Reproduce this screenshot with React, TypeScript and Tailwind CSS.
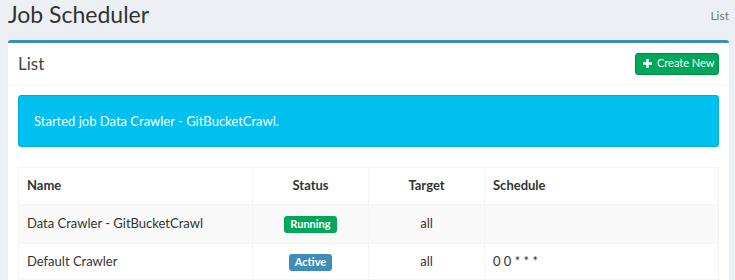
import React from "react";

const rows = [
  { name: "Data Crawler - GitBucketCrawl", status: "Running", target: "all", schedule: "" },
  { name: "Default Crawler", status: "Active", target: "all", schedule: "0 0 * * *" },
];

export default function App() {
  return (
    <div
      className="min-h-[280px] w-full bg-[#ecf0f5] pl-2 pr-[6px] text-[13px] text-[#333]"
      style={{ fontFamily: "Lato, 'Noto Sans', sans-serif" }}
    >
      <div className="flex items-start justify-between">
        <h1 className="pt-[1px] text-[23px] leading-[26px] text-[#333]">Job Scheduler</h1>
        <div className="pt-[7px] text-[12px] text-[#777]">List</div>
      </div>
      <div className="mt-[13px] rounded-[3px] border-t-[3px] border-[#3c8dbc] bg-white shadow-[0_1px_1px_rgba(0,0,0,0.1)]">
        <div className="flex h-[42px] items-center justify-between border-b border-[#f4f4f4] px-[10px]">
          <h3 className="text-[17px] leading-none text-[#444]">List</h3>
          <button className="flex h-[22px] w-[84px] items-center gap-[5px] rounded-[3px] border border-[#008d4c] bg-[#00a65a] pl-[7px] text-[11px] text-white">
            <svg width="9" height="9" viewBox="0 0 10 10" fill="white">
              <rect x="3.6" y="0" width="2.8" height="10" />
              <rect x="0" y="3.6" width="10" height="2.8" />
            </svg>
            Create New
          </button>
        </div>
        <div className="p-[10px]">
          <div className="rounded-[3px] border border-[#00acd6] bg-[#00c0ef] px-[15px] py-[15px] text-[13px] leading-[20px] text-white">
            Started job Data Crawler - GitBucketCrawl.
          </div>
          <table className="mt-[20px] w-full border-collapse border border-[#f4f4f4] text-[13px]">
            <thead>
              <tr className="h-[37px]">
                <th className="w-[234px] border border-[#f4f4f4] px-[8px] text-left font-bold">Name</th>
                <th className="w-[116px] border border-[#f4f4f4] px-[8px] text-center font-bold">Status</th>
                <th className="w-[116px] border border-[#f4f4f4] px-[8px] text-center font-bold">Target</th>
                <th className="border border-[#f4f4f4] px-[8px] text-left font-bold">Schedule</th>
              </tr>
            </thead>
            <tbody>
              {rows.map((r, i) => (
                <tr key={r.name} className={i === 0 ? "h-[39px] bg-[#f9f9f9]" : "h-[36px] bg-white"}>
                  <td className="border border-[#f4f4f4] px-[8px]">{r.name}</td>
                  <td className="border border-[#f4f4f4] px-[8px] text-center">
                    <span
                      className={
                        "inline-block rounded-[3px] px-[6px] pb-[2px] pt-[1px] text-[11px] font-bold leading-[14px] text-white " +
                        (r.status === "Running" ? "bg-[#00a65a]" : "bg-[#3c8dbc]")
                      }
                    >
                      {r.status}
                    </span>
                  </td>
                  <td className="border border-[#f4f4f4] px-[8px] text-center">{r.target}</td>
                  <td className="border border-[#f4f4f4] px-[8px]">{r.schedule}</td>
                </tr>
              ))}
            </tbody>
          </table>
        </div>
      </div>
    </div>
  );
}
